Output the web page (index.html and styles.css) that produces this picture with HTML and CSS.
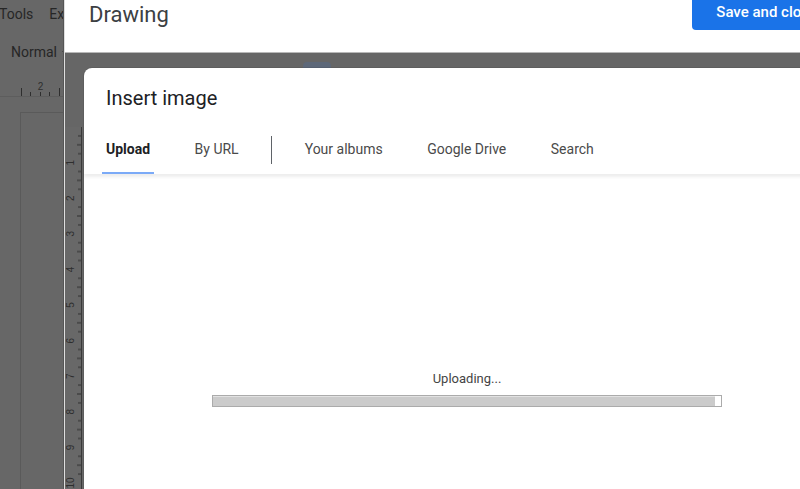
FILE: index.html
```html
<!DOCTYPE html>
<html lang="en">
<head>
  <meta charset="UTF-8" />
  <meta name="viewport" content="width=device-width, initial-scale=1" />
  <title>Insert image</title>
  <link rel="stylesheet" href="styles.css">
</head>
<body>
  <!-- Docs window behind the dialogs -->
  <div class="docs">
    <div class="menubar">
      <span>Tools</span>
      <span>Ex</span>
    </div>
    <div class="doc-toolbar">
      <span>Normal</span>
      <span class="caret"></span>
    </div>
    <svg class="hruler" width="64" height="20" viewBox="0 0 64 20">
      <line x1="0" y1="18.5" x2="64" y2="18.5" stroke="#5d5d5d" />
      <g stroke="#2e2e2e">
        <line x1="21.5" y1="10" x2="21.5" y2="18" />
        <line x1="30.5" y1="14" x2="30.5" y2="18" />
        <line x1="40.5" y1="14" x2="40.5" y2="18" />
        <line x1="49.5" y1="14" x2="49.5" y2="18" />
        <line x1="59.5" y1="10" x2="59.5" y2="18" />
      </g>
      <text x="40.5" y="11.5" text-anchor="middle" class="ruler-num">2</text>
    </svg>
    <div class="page"></div>
  </div>

  <!-- Drawing dialog -->
  <div class="drawing">
    <header class="drawing-head">
      <h1>Drawing</h1>
      <button class="save">Save and close</button>
    </header>
    <div class="drawing-body">
      <div class="draw-toolbar">
        <span class="tool-on"></span>
      </div>
      <svg class="vruler" width="18" height="362" viewBox="0 0 18 362">
        <defs>
          <pattern id="ticks" width="18" height="35.6" patternUnits="userSpaceOnUse">
            <g stroke="#2e2e2e">
              <line x1="13" y1="8.9" x2="16" y2="8.9" />
              <line x1="12" y1="17.8" x2="16" y2="17.8" />
              <line x1="13" y1="26.7" x2="16" y2="26.7" />
            </g>
          </pattern>
        </defs>
        <rect width="18" height="362" fill="url(#ticks)" />
        <line x1="16.5" y1="0" x2="16.5" y2="362" stroke="#3a3a3a" />
        <g class="ruler-num" text-anchor="middle">
          <text transform="translate(5,35.6) rotate(-90)" dy="3.5">1</text>
          <text transform="translate(5,71.2) rotate(-90)" dy="3.5">2</text>
          <text transform="translate(5,106.8) rotate(-90)" dy="3.5">3</text>
          <text transform="translate(5,142.4) rotate(-90)" dy="3.5">4</text>
          <text transform="translate(5,178) rotate(-90)" dy="3.5">5</text>
          <text transform="translate(5,213.6) rotate(-90)" dy="3.5">6</text>
          <text transform="translate(5,249.2) rotate(-90)" dy="3.5">7</text>
          <text transform="translate(5,284.8) rotate(-90)" dy="3.5">8</text>
          <text transform="translate(5,320.4) rotate(-90)" dy="3.5">9</text>
          <text transform="translate(5,356) rotate(-90)" dy="3.5">10</text>
        </g>
      </svg>
    </div>
  </div>

  <!-- Insert image dialog -->
  <div class="insert">
    <h2>Insert image</h2>
    <nav class="tabs">
      <span class="tab active">Upload</span>
      <span class="tab">By URL</span>
      <span class="tab-divider"></span>
      <span class="tab">Your albums</span>
      <span class="tab">Google Drive</span>
      <span class="tab">Search</span>
    </nav>
    <div class="upload">
      <p class="upload-label">Uploading...</p>
      <div class="progress">
        <div class="progress-fill" style="width: 98.8%"></div>
      </div>
    </div>
  </div>
</body>
</html>
```

FILE: styles.css
```css
body {
  margin: 0;
  width: 800px;
  height: 489px;
  overflow: hidden;
  position: relative;
  background: #676767;
  font-family: Roboto, "Liberation Sans", Arial, sans-serif;
}

/* Docs page, dimmed behind the drawing dialog */
.docs {
  width: 64px;
  overflow: hidden;
  white-space: nowrap;
  color: #262626;
  font-size: 14px;
}

.menubar {
  display: flex;
  gap: 16px;
  height: 28px;
  align-items: center;
  margin-left: -1px;
}

.doc-toolbar {
  display: flex;
  align-items: center;
  gap: 5px;
  height: 28px;
  margin-top: 10px;
  padding-left: 11px;
}

.caret {
  width: 0;
  height: 0;
  border-left: 3px solid transparent;
  border-right: 3px solid transparent;
  border-top: 3px solid #2e2e2e;
}

.hruler {
  display: block;
  margin-top: 12px;
}

.ruler-num {
  font-size: 10px;
  fill: #2e2e2e;
  font-family: "Liberation Sans", Arial, sans-serif;
}

.page {
  margin: 14px 0 0 20px;
  height: 400px;
  border-top: 1px solid #5a5a5a;
  border-left: 1px solid #5a5a5a;
}

/* Drawing dialog */
.drawing {
  position: absolute;
  top: 0;
  left: 64px;
  bottom: 0;
  width: 808px;
  border-left: 1px solid #dedede;
  box-shadow: -1px 0 0 #555;
  display: flex;
  flex-direction: column;
}

.drawing-head {
  display: flex;
  align-items: flex-start;
  height: 53px;
  background: #fff;
  border-bottom: 1px solid #b8b8b8;
  padding-right: 32px;
}

.drawing-head h1 {
  margin: 0;
  padding-left: 24px;
  font-size: 22px;
  font-weight: 400;
  line-height: 30px;
  color: #3c4043;
}

.save {
  margin: -6px 0 0 auto;
  height: 36px;
  padding: 0 24px;
  border: none;
  border-radius: 4px;
  background: #1a73e8;
  color: #fff;
  font-family: inherit;
  font-size: 15px;
  font-weight: 500;
  white-space: nowrap;
}

.drawing-body {
  flex: 1;
  background: #666;
}

.draw-toolbar {
  height: 74px;
  padding-top: 9px;
  box-sizing: border-box;
}

.tool-on {
  display: block;
  width: 28px;
  height: 28px;
  margin-left: 238px;
  border-radius: 4px;
  background: #5d6879;
}

.vruler {
  display: block;
  background: #686868;
}

/* Insert image dialog */
.insert {
  position: absolute;
  top: 68px;
  left: 84px;
  width: 766px;
  height: 460px;
  background: #fff;
  border-radius: 8px;
  box-shadow: 0 0 0 1px rgba(0, 0, 0, 0.08);
}

.insert h2 {
  margin: 0;
  padding: 18px 22px 0;
  font-size: 20px;
  font-weight: 400;
  line-height: 24px;
  color: #202124;
}

.tabs {
  display: flex;
  gap: 36.5px;
  height: 48px;
  margin-top: 16px;
  padding-left: 18px;
  box-shadow: 0 3px 3px rgba(0, 0, 0, 0.07);
}

.tab {
  display: flex;
  align-items: center;
  padding: 0 4px;
  font-size: 14px;
  color: #4a4a4a;
  border-bottom: 2px solid transparent;
}

.tab.active {
  font-weight: 700;
  color: #202124;
  border-bottom-color: #7baaf7;
}

.tab-divider {
  width: 1px;
  height: 28px;
  align-self: center;
  margin: 0 -8px;
  background: #5f6368;
}

.upload {
  text-align: center;
}

.upload-label {
  margin: 0;
  padding-top: 197px;
  font-size: 13px;
  line-height: 16px;
  color: #444;
}

.progress {
  width: 510px;
  height: 12px;
  margin: 8px auto 0;
  box-sizing: border-box;
  border: 1px solid #ababab;
  background: #fff;
}

.progress-fill {
  height: 100%;
  background: #cbcbcb;
  box-shadow: inset 0 1px 0 #e2e2e2;
}
```
